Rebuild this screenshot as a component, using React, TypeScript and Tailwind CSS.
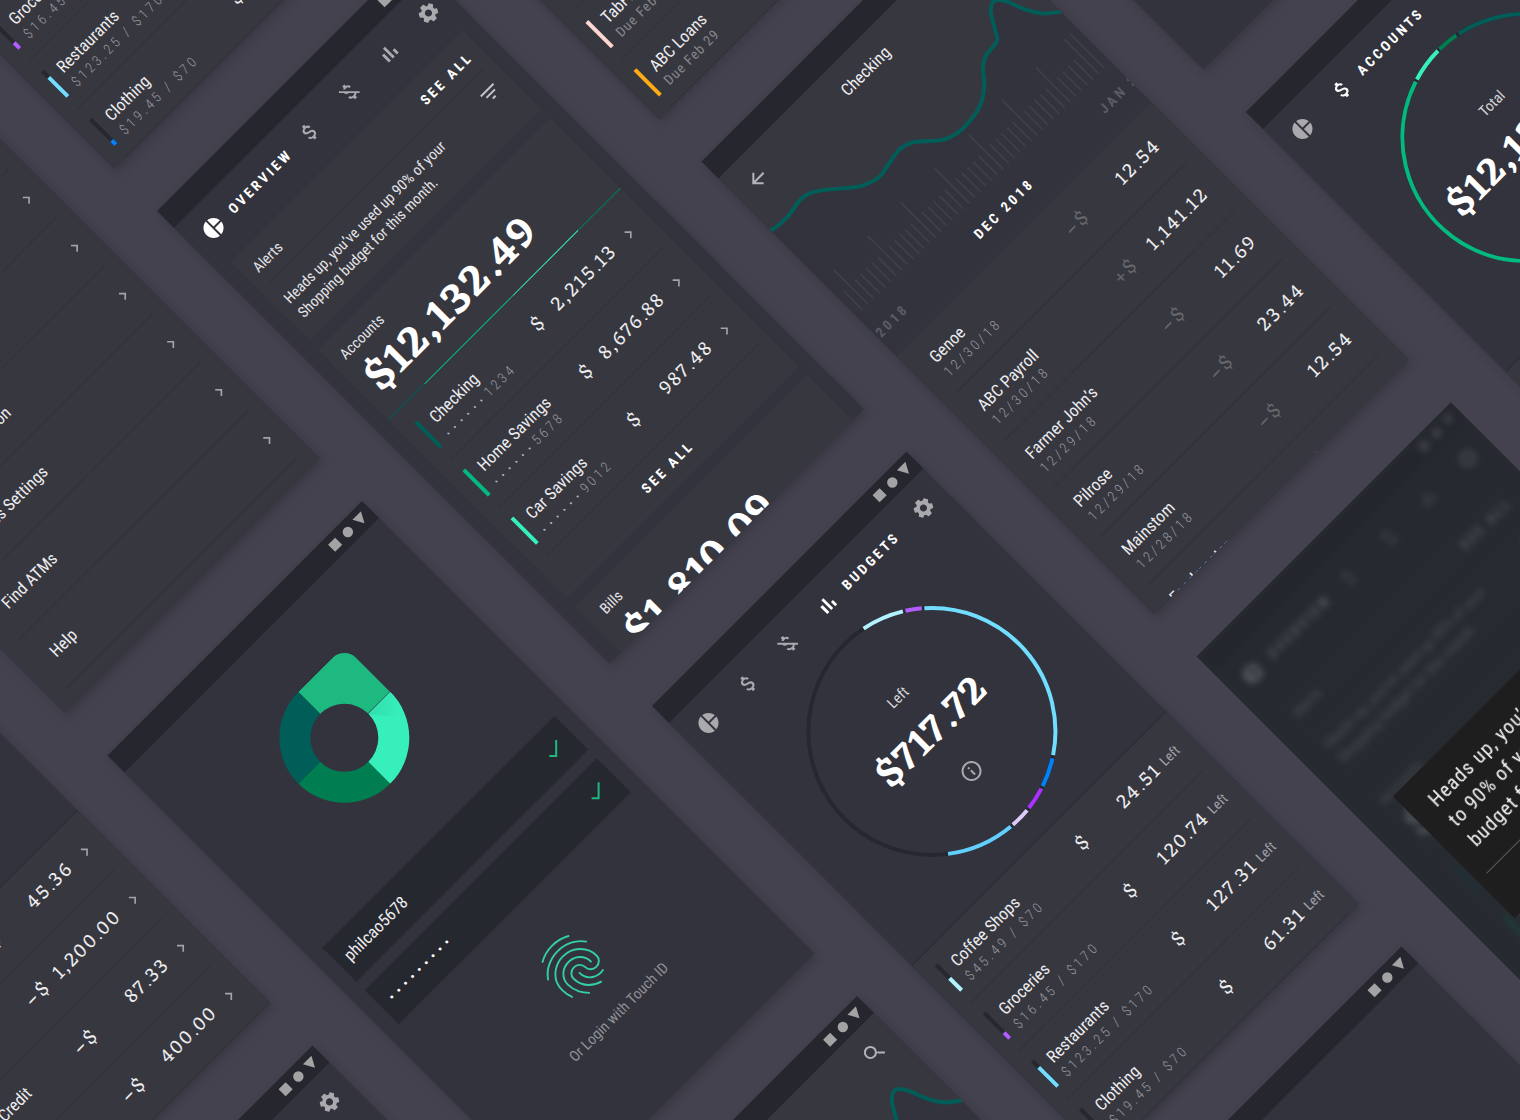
import React from "react";
import {
  MdArrowBack,
  MdAttachMoney,
  MdCheck,
  MdChevronRight,
  MdFilterList,
  MdInfoOutline,
  MdMoneyOff,
  MdPieChart,
  MdSearch,
  MdSettings,
} from "react-icons/md";

/* ---------- shared pieces ---------- */

const TEAL = "#005D57";
const GREEN = "#04B97F";
const DEEP = "#007D51";
const MINT = "#37EFBA";

function Screen({ label, children }: { label: string; children: React.ReactNode }) {
  return (
    <section
      aria-label={label}
      className="flex h-[640px] w-[360px] shrink-0 flex-col overflow-hidden bg-[#33333d] shadow-[0_4px_9px_rgba(38,38,46,0.4)]"
    >
      {children}
    </section>
  );
}

function StatusBar() {
  return (
    <div className="flex h-6 shrink-0 items-center justify-end bg-[#26262f] pr-2">
      <svg viewBox="0 0 48 12" className="h-3 w-12 fill-[#a3a3a3]" aria-hidden="true">
        <rect x="1" y="1" width="10" height="10" />
        <circle cx="24" cy="6" r="5.2" />
        <path d="M36 0.5 H48 L42 11.5 Z" />
      </svg>
    </div>
  );
}

function BarsIcon({ size = 24, className }: { size?: number; className?: string }) {
  return (
    <svg viewBox="0 0 24 24" width={size} height={size} fill="currentColor" className={className} aria-hidden="true">
      <path d="M5 9.2h3V19H5zM10.6 5h2.8v14h-2.8zM16.2 13H19v6h-2.8z" />
    </svg>
  );
}

const TABS = [
  { name: "Overview", Icon: MdPieChart },
  { name: "Accounts", Icon: MdAttachMoney },
  { name: "Bills", Icon: MdMoneyOff },
  { name: "Budgets", Icon: BarsIcon },
  { name: "Settings", Icon: MdSettings },
];

function Tabs({ active }: { active: string }) {
  return (
    <nav className="flex h-14 shrink-0 items-center">
      {TABS.map(({ name, Icon }) =>
        name === active ? (
          <button key={name} className="flex flex-1 items-center gap-3 pl-4 text-white">
            <Icon size={24} className="shrink-0" />
            <span className="text-[14px] leading-5 font-bold tracking-[3px] uppercase">{name}</span>
          </button>
        ) : (
          <button
            key={name}
            aria-label={name}
            className="flex w-14 shrink-0 items-center justify-center text-[#a9a9ae]"
          >
            <Icon size={24} />
          </button>
        ),
      )}
    </nav>
  );
}

type RowProps = {
  name: string;
  sub?: React.ReactNode;
  amount: string;
  color?: string;
  fill?: number;
  sign?: string;
  dim?: boolean;
  end?: React.ReactNode;
};

function Row({ name, sub, amount, color, fill = 1, sign, dim, end }: RowProps) {
  return (
    <li className="flex h-[68px] items-center border-b border-[#32323b]">
      {color ? (
        <span className="mr-[11px] flex h-9 w-1 shrink-0 flex-col justify-end bg-[#26282f]">
          <span style={{ height: `${fill * 100}%`, background: color }} />
        </span>
      ) : (
        <span className="w-[7px]" />
      )}
      <div className="flex-1 pt-[6px] whitespace-nowrap">
        <p className="text-[17px] leading-5 text-[#ececee]">{name}</p>
        <p className="text-[14px] leading-5 font-light tracking-[3px] text-[#98989e]">{sub}</p>
      </div>
      <div className="flex w-[113px] items-center justify-between font-['Eczar','Noto_Serif',serif] text-[20px] leading-6 tracking-[2px] text-[#ececee]">
        <span className={dim ? "text-[#66666c]" : ""}>
          {sign && <span className="-ml-[14px] inline-block w-[14px]">{sign}</span>}$
        </span>
        <span>{amount}</span>
      </div>
      {end}
    </li>
  );
}

function InsetChevron() {
  return <MdChevronRight size={20} className="mr-1 ml-[11px] shrink-0 text-[#a3a3a8]" />;
}

function EdgeChevron() {
  return <MdChevronRight size={20} className="-mr-[3px] ml-[11px] shrink-0 text-[#a3a3a8]" />;
}

function Masked({ digits }: { digits: string }) {
  return (
    <>
      <span className="text-[10px] font-normal tracking-[6px] text-[#b5b5b9]">••••••</span>
      {digits}
    </>
  );
}

function Due({ date }: { date: string }) {
  return <span className="font-normal tracking-[1px] text-[#85858b]">Due {date}</span>;
}

function Left() {
  return <span className="ml-[5px] w-6 text-[14px] text-[#a3a3a8]">Left</span>;
}

/* ---------- ring gauge ---------- */

type Segment = [start: number, end: number, color: string];

const RADIUS = 123.5;

function point(deg: number) {
  const a = ((deg - 90) * Math.PI) / 180;
  return `${126 + RADIUS * Math.cos(a)} ${126 + RADIUS * Math.sin(a)}`;
}

function arc([start, end]: Segment) {
  return `M${point(start)} A${RADIUS} ${RADIUS} 0 ${end - start > 180 ? 1 : 0} 1 ${point(end)}`;
}

function Ring({
  label,
  amount,
  segments,
  info,
}: {
  label: string;
  amount: string;
  segments: Segment[];
  info?: boolean;
}) {
  return (
    <div className="flex h-[288px] shrink-0 justify-center pt-[10px]">
      <div className="relative flex h-[252px] w-[252px] flex-col items-center pt-[66px]">
        <svg viewBox="0 0 252 252" className="absolute inset-0" fill="none" strokeWidth="4" aria-hidden="true">
          <circle cx="126" cy="126" r={RADIUS} stroke="#26282f" />
          {segments.map((s) => (
            <path key={s[0]} d={arc(s)} stroke={s[2]} />
          ))}
        </svg>
        <p className="text-[15px] leading-6 text-[#d6d6d8]">{label}</p>
        <p className="mt-[14px] font-['Eczar','Noto_Serif',serif] text-[40px] leading-[48px] font-semibold tracking-[1px] text-white">
          {amount}
        </p>
        {info && (
          <button aria-label="About this total" className="mt-[18px] text-[#a9a9ae]">
            <MdInfoOutline size={24} />
          </button>
        )}
      </div>
    </div>
  );
}

function ListPanel({ children }: { children: React.ReactNode }) {
  return (
    <ul className="flex-1 bg-[#373740] px-4 shadow-[0_-1px_1px_rgba(38,38,47,0.5)]">{children}</ul>
  );
}

/* ---------- screens ---------- */

function CardTotal({ title, amount }: { title: string; amount: string }) {
  return (
    <div className="pt-3 pb-3">
      <h2 className="text-[15px] leading-5 text-[#e4e4e6]">{title}</h2>
      <p className="mt-2 h-[47px] pl-0.5 font-['Eczar','Noto_Serif',serif] text-[44px] leading-[48px] font-semibold tracking-[1px] text-white">
        {amount}
      </p>
    </div>
  );
}

function Overview() {
  return (
    <Screen label="Overview">
      <StatusBar />
      <Tabs active="Overview" />
      <div className="flex flex-col gap-3 px-4 pt-2">
        <div className="h-28 bg-[#373740] px-3">
          <div className="flex h-[43px] items-center justify-between border-b border-[#32323b] pt-1">
            <h2 className="text-[15px] leading-5 text-[#e4e4e6]">Alerts</h2>
            <button className="text-[14px] leading-5 font-bold tracking-[3px] text-white">SEE ALL</button>
          </div>
          <div className="flex items-start justify-between pt-[14px]">
            <p className="text-[15px] leading-5 whitespace-nowrap text-[#e4e4e6]">
              Heads up, you’ve used up 90% of your
              <br />
              Shopping budget for this month.
            </p>
            <button aria-label="Filter alerts" className="-mt-1 mr-px text-[#c4c4c7]">
              <MdFilterList size={24} />
            </button>
          </div>
        </div>
        <div className="h-[352px] bg-[#373740]">
          <div className="pl-3">
            <CardTotal title="Accounts" amount="$12,132.49" />
          </div>
          <div className="mb-1 flex h-px">
            <span className="w-[51px] bg-[#005d57]" />
            <span className="w-[125px] bg-[#04b97f]" />
            <span className="w-[92px] bg-[#37efba]" />
            <span className="flex-1 bg-[#007d51]" />
          </div>
          <ul className="mx-3 pl-1">
            <Row name="Checking" sub={<Masked digits="1234" />} amount="2,215.13" color={TEAL} end={<InsetChevron />} />
            <Row name="Home Savings" sub={<Masked digits="5678" />} amount="8,676.88" color={GREEN} end={<InsetChevron />} />
            <Row name="Car Savings" sub={<Masked digits="9012" />} amount="987.48" color={MINT} end={<InsetChevron />} />
          </ul>
          <button className="h-11 w-full text-[14px] font-bold tracking-[3px] text-white">SEE ALL</button>
        </div>
        <div className="h-[352px] bg-[#373740]">
          <div className="pl-4">
            <CardTotal title="Bills" amount="$1,810.09" />
          </div>
        </div>
      </div>
    </Screen>
  );
}

const BUDGET_SEGMENTS: Segment[] = [
  [11.4, 31.4, "#B2F2FF"],
  [32.6, 40.3, "#B15DFF"],
  [41.5, 146.1, "#72DEFF"],
  [147.6, 161.3, "#0082FB"],
  [162.6, 173.3, "#A932FF"],
  [174.6, 184.1, "#DCCAFB"],
  [185.3, 217.5, "#62CFFF"],
];

function Budgets() {
  return (
    <Screen label="Budgets">
      <StatusBar />
      <Tabs active="Budgets" />
      <Ring label="Left" amount="$717.72" segments={BUDGET_SEGMENTS} info />
      <ListPanel>
        <Row name="Coffee Shops" sub="$45.49 / $70" amount="24.51" color="#B2F2FF" fill={0.46} end={<Left />} />
        <Row name="Groceries" sub="$16.45 / $170" amount="120.74" color="#B15DFF" fill={0.2} end={<Left />} />
        <Row name="Restaurants" sub="$123.25 / $170" amount="127.31" color="#72DEFF" fill={0.75} end={<Left />} />
        <Row name="Clothing" sub="$19.45 / $70" amount="61.31" color="#0082FB" fill={0.15} end={<Left />} />
      </ListPanel>
    </Screen>
  );
}

function Bills() {
  return (
    <Screen label="Bills">
      <StatusBar />
      <Tabs active="Bills" />
      <Ring
        label="Due"
        amount="$1,810.09"
        segments={[
          [0, 9, "#FF6951"],
          [10, 120, "#FFD7D0"],
          [121, 150, "#FFAC12"],
        ]}
      />
      <ListPanel>
        <Row name="RedPay Credit" sub={<Due date="Jan 29" />} sign="–" amount="45.36" color="#FF6951" end={<EdgeChevron />} />
        <Row name="Rent" sub={<Due date="Feb 9" />} sign="–" amount="1,200.00" color="#FF6951" end={<EdgeChevron />} />
        <Row name="TabFine Credit" sub={<Due date="Feb 22" />} sign="–" amount="87.33" color="#FFD7D0" end={<EdgeChevron />} />
        <Row name="ABC Loans" sub={<Due date="Feb 29" />} sign="–" amount="400.00" color="#FFAC12" end={<EdgeChevron />} />
      </ListPanel>
    </Screen>
  );
}

function Accounts() {
  return (
    <Screen label="Accounts">
      <StatusBar />
      <Tabs active="Accounts" />
      <Ring
        label="Total"
        amount="$12,132.49"
        segments={[
          [0.6, 10.7, DEEP],
          [12.1, 100, TEAL],
          [101, 341.9, GREEN],
          [343, 359.6, MINT],
        ]}
      />
      <ListPanel>
        <Row name="Checking" sub={<Masked digits="1234" />} amount="2,215.13" color={TEAL} end={<EdgeChevron />} />
        <Row name="Home Savings" sub={<Masked digits="5678" />} amount="8,676.88" color={GREEN} end={<EdgeChevron />} />
        <Row name="Car Savings" sub={<Masked digits="9012" />} amount="987.48" color={MINT} end={<EdgeChevron />} />
      </ListPanel>
    </Screen>
  );
}

const BALANCE: [number, number][] = [
  [-12, 68], [0, 74], [21, 76], [42, 73], [54, 75], [68, 84], [81, 95], [97, 107], [115, 112.6],
  [132, 110], [149, 107.5], [163, 112], [176, 123], [189, 133], [208, 137.5], [235, 134], [253, 123],
  [266, 108], [277, 102], [289, 101], [295.5, 99], [300, 92], [309.6, 76], [318, 69.5], [325, 72.5],
  [330, 81], [336.7, 98], [346, 112.6], [360, 124], [372, 132],
];

function smoothPath(points: [number, number][]) {
  let d = `M${points[0][0]} ${points[0][1]}`;
  for (let i = 0; i < points.length - 1; i++) {
    const [p0, p1, p2, p3] = [points[i - 1] ?? points[i], points[i], points[i + 1], points[i + 2] ?? points[i + 1]];
    d += ` C${p1[0] + (p2[0] - p0[0]) / 6} ${p1[1] + (p2[1] - p0[1]) / 6} ${p2[0] - (p3[0] - p1[0]) / 6} ${
      p2[1] - (p3[1] - p1[1]) / 6
    } ${p2[0]} ${p2[1]}`;
  }
  return d;
}

function Checking() {
  const line = smoothPath(BALANCE);
  return (
    <Screen label="Checking">
      <StatusBar />
      <div className="relative flex h-[252px] shrink-0 flex-col">
        <svg viewBox="0 0 360 252" className="absolute inset-0" aria-hidden="true">
          <path d={`${line} V-4 H-12 Z`} fill="#373740" />
          <path d={line} fill="none" stroke={TEAL} strokeWidth="4" />
        </svg>
        <header className="relative flex h-14 items-center justify-between px-4 text-[#b4b4b8]">
          <button aria-label="Back">
            <MdArrowBack size={24} />
          </button>
          <h1 className="text-[17px] leading-5 text-[#ececee]">Checking</h1>
          <button aria-label="Search">
            <MdSearch size={24} />
          </button>
        </header>
        <div className="mt-auto flex items-end justify-between px-2" aria-hidden="true">
          {Array.from({ length: 44 }, (_, i) => (
            <span
              key={i}
              className={i % 6 === 1 || i === 42 ? "h-[49px] w-0.5 bg-[#3e3e48]" : "h-[27px] w-0.5 bg-[#3e3e48]"}
            />
          ))}
        </div>
        <div className="-mx-[38px] flex h-[57px] items-center justify-between text-[14px] font-bold tracking-[3px] whitespace-nowrap text-[#5b5b63]">
          <span>NOV 2018</span>
          <span className="text-white">DEC 2018</span>
          <span>JAN 2019</span>
        </div>
      </div>
      <ul className="flex-1 bg-[#373740] px-4">
        {[
          ["Genoe", "12/30/18", "–", "12.54"],
          ["ABC Payroll", "12/30/18", "+", "1,141.12"],
          ["Farmer John’s", "12/29/18", "–", "11.69"],
          ["Pilrose", "12/29/18", "–", "23.44"],
          ["Mainstom", "12/28/18", "–", "12.54"],
          ["Foodmaster", "12/28/18", "–", "50.36"],
        ].map(([name, date, sign, amount]) => (
          <Row key={name} name={name} sub={date} sign={sign} amount={amount} dim end={<span className="w-2" />} />
        ))}
      </ul>
    </Screen>
  );
}

function Logo() {
  return (
    <svg viewBox="0 0 130 130" className="h-[130px] w-[130px]" role="img" aria-label="Rally">
      <defs>
        <linearGradient id="fold" x1="95" y1="66" x2="112" y2="92" gradientUnits="userSpaceOnUse">
          <stop offset="0" stopColor="#30dcab" />
          <stop offset="1" stopColor="#37efba" />
        </linearGradient>
      </defs>
      <path d="M65 0 A65 65 0 0 0 0 65 H31 A34 34 0 0 1 65 31 Z" fill="#005d57" />
      <path d="M0 65 A65 65 0 0 0 65 130 V99 A34 34 0 0 1 31 65 Z" fill="#007d51" />
      <path d="M65 130 A65 65 0 0 0 130 65 H99 A34 34 0 0 1 65 99 Z" fill="#37efba" />
      <path d="M99 66 H129.9 A65 65 0 0 1 122 94 Z" fill="url(#fold)" />
      <path d="M65 0 H113 A17 17 0 0 1 130 17 V64.4 H99 A34 34 0 0 0 65 31 Z" fill="#1eb980" />
    </svg>
  );
}

function Fingerprint() {
  return (
    <svg
      viewBox="0 0 24 24"
      className="h-[76px] w-[76px] stroke-[#33cfa2]"
      fill="none"
      strokeWidth="0.6"
      strokeLinecap="round"
      aria-hidden="true"
    >
      <path d="M6.2 4 C7.9 3 9.9 2.5 12 2.5 C14.1 2.5 15.8 2.9 17.8 4" />
      <path d="M3.5 9.2 C4.4 7.9 5.6 6.8 7.1 6.1 C10.1 4.6 13.9 4.6 16.9 6.1 C18.4 6.8 19.6 7.9 20.5 9.2" />
      <path d="M14.9 21.5 C13.4 21.1 12.4 20.5 11.4 19.5 C10.1 18.2 9.4 16.5 9.4 14.7 C9.4 13.3 10.5 12.2 12 12.2 C13.4 12.2 14.6 13.3 14.6 14.7 C14.6 16 15.7 17.1 17.1 17.1 C18.6 17.1 19.7 16 19.7 14.7 C19.7 10.6 16.2 7.3 12 7.3 C8.9 7.3 6.2 9 4.9 11.6 C4.5 12.5 4.3 13.5 4.3 14.7 C4.3 15.5 4.3 16.8 5 18.4" />
      <path d="M9.7 21.3 C8.9 20.4 8.4 19.8 7.8 18.7 C7.2 17.5 6.8 16.1 6.8 14.7 C6.8 11.9 9.1 9.8 12 9.8 C14.8 9.8 17.1 11.9 17.1 14.7" />
      <path d="M17.9 19.3 C16.4 19.6 15.2 19.3 14.1 18.6 C12.7 17.7 12 16.2 12 14.7" />
    </svg>
  );
}

function Login() {
  return (
    <Screen label="Login">
      <StatusBar />
      <form className="flex flex-1 flex-col items-center px-4 pt-[66px]">
        <Logo />
        <div className="mt-[68px] flex w-full flex-col gap-3">
          <label className="flex h-12 items-center bg-[#26282f] pr-3 pl-[10px]">
            <input
              aria-label="Username"
              defaultValue="philcao5678"
              className="min-w-0 flex-1 bg-transparent text-[17px] leading-6 text-[#ececee] outline-none"
            />
            <MdCheck size={24} className="text-[#1eb980]" />
          </label>
          <label className="flex h-12 items-center bg-[#26282f] pr-3 pl-3">
            <input
              type="password"
              aria-label="Password"
              defaultValue="rally2018"
              className="min-w-0 flex-1 bg-transparent text-[14px] leading-6 tracking-[5px] text-white outline-none"
            />
            <MdCheck size={24} className="text-[#1eb980]" />
          </label>
        </div>
        <button type="button" className="mt-[45px] flex flex-col items-center">
          <Fingerprint />
          <span className="mt-4 text-[15px] leading-5 text-[#8f8f95]">Or Login with Touch ID</span>
        </button>
      </form>
    </Screen>
  );
}

function Splash() {
  return (
    <Screen label="Loading">
      <StatusBar />
    </Screen>
  );
}

function Settings() {
  return (
    <Screen label="Settings">
      <StatusBar />
      <Tabs active="Settings" />
      <ul className="flex-1 bg-[#373740]">
        {[
          "Manage Accounts",
          "Tax Documents",
          "Passcode and Touch ID",
          "Notifications",
          "Personal Information",
          "Paperless Settings",
          "Find ATMs",
          "Help",
        ].map((name) => (
          <li key={name} className="mx-4 border-b border-[#32323b]">
            <a href="#settings" className="flex h-[67px] items-center justify-between pl-[17px] text-[17px] text-[#ececee]">
              {name}
              <MdChevronRight size={20} className="-mr-[3px] text-[#a3a3a8]" />
            </a>
          </li>
        ))}
      </ul>
    </Screen>
  );
}

function AlertScreen() {
  return (
    <div className="relative shrink-0 overflow-hidden">
      <div className="blur-[3px]" aria-hidden="true" inert>
        <Overview />
      </div>
      <div className="absolute inset-0 flex items-start justify-center bg-[#23272d]/80 pt-[238px]">
        <div role="dialog" aria-label="Budget alert" className="h-[172px] w-[280px] bg-[#1e1e1e] px-3 pt-[18px]">
          <p className="px-[11px] text-[20px] leading-7 tracking-[1px] whitespace-nowrap text-[#f4f4f5]">
            Heads up, you’ve used up
            <br />
            to 90% of your Shopping
            <br />
            budget for this month.
          </p>
          <button className="mt-[18px] h-[52px] w-full border-t border-[#5a5a5a] text-[14px] font-bold tracking-[3px] text-white">
            DISMISS
          </button>
        </div>
      </div>
    </div>
  );
}

/* ---------- board ---------- */

export default function App() {
  return (
    <main className="relative h-screen w-full overflow-hidden bg-[#44424f] font-['Roboto_Condensed','Roboto',sans-serif]">
      <div className="absolute top-[310px] left-[-932px] flex origin-top-left -rotate-45 items-start gap-[60px]">
        <div className="flex flex-col gap-[60px] pt-[700px]">
          <Bills />
          <Overview />
        </div>
        <div className="flex flex-col gap-[60px] pt-[350px]">
          <Settings />
          <Login />
          <Checking />
        </div>
        <div className="flex flex-col gap-[60px]">
          <Budgets />
          <Overview />
          <Budgets />
          <Splash />
        </div>
        <div className="flex flex-col gap-[60px] pt-[350px]">
          <Bills />
          <Checking />
          <AlertScreen />
        </div>
        <div className="flex flex-col gap-[60px] pt-[700px]">
          <Splash />
          <Accounts />
        </div>
      </div>
    </main>
  );
}
